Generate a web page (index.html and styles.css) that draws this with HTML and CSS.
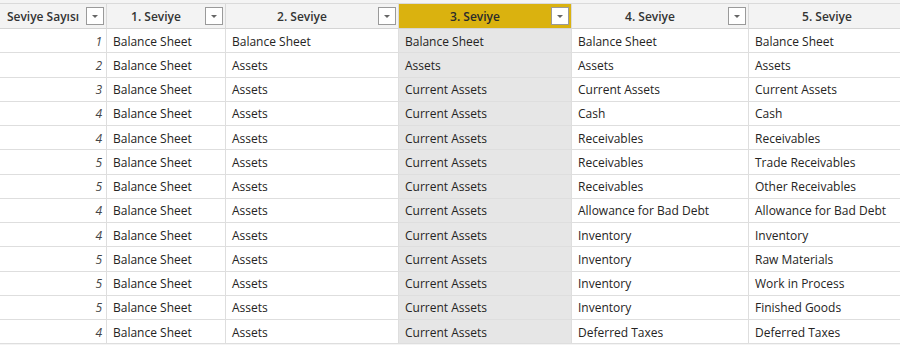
FILE: index.html
```html
<!DOCTYPE html>
<html lang="tr">
<head>
<meta charset="utf-8">
<title>Seviye</title>
<link rel="stylesheet" href="styles.css">
</head>
<body>
<div class="grid">
  <div class="hcell"><span class="htext">Seviye Sayısı</span><span class="filter"><svg viewBox="0 0 18 18" width="18" height="18"><path d="M6 8h6l-3 3z" fill="#666"/></svg></span></div>
  <div class="hcell"><span class="htext">1. Seviye</span><span class="filter"><svg viewBox="0 0 18 18" width="18" height="18"><path d="M6 8h6l-3 3z" fill="#666"/></svg></span></div>
  <div class="hcell"><span class="htext">2. Seviye</span><span class="filter"><svg viewBox="0 0 18 18" width="18" height="18"><path d="M6 8h6l-3 3z" fill="#666"/></svg></span></div>
  <div class="hcell sel"><span class="htext">3. Seviye</span><span class="filter"><svg viewBox="0 0 18 18" width="18" height="18"><path d="M6 8h6l-3 3z" fill="#666"/></svg></span></div>
  <div class="hcell"><span class="htext">4. Seviye</span><span class="filter"><svg viewBox="0 0 18 18" width="18" height="18"><path d="M6 8h6l-3 3z" fill="#666"/></svg></span></div>
  <div class="hcell"><span class="htext">5. Seviye</span><span class="filter"><svg viewBox="0 0 18 18" width="18" height="18"><path d="M6 8h6l-3 3z" fill="#666"/></svg></span></div>

  <div class="cell num">1</div><div class="cell">Balance Sheet</div><div class="cell">Balance Sheet</div><div class="cell sel">Balance Sheet</div><div class="cell">Balance Sheet</div><div class="cell">Balance Sheet</div>
  <div class="cell num">2</div><div class="cell">Balance Sheet</div><div class="cell">Assets</div><div class="cell sel">Assets</div><div class="cell">Assets</div><div class="cell">Assets</div>
  <div class="cell num">3</div><div class="cell">Balance Sheet</div><div class="cell">Assets</div><div class="cell sel">Current Assets</div><div class="cell">Current Assets</div><div class="cell">Current Assets</div>
  <div class="cell num">4</div><div class="cell">Balance Sheet</div><div class="cell">Assets</div><div class="cell sel">Current Assets</div><div class="cell">Cash</div><div class="cell">Cash</div>
  <div class="cell num">4</div><div class="cell">Balance Sheet</div><div class="cell">Assets</div><div class="cell sel">Current Assets</div><div class="cell">Receivables</div><div class="cell">Receivables</div>
  <div class="cell num">5</div><div class="cell">Balance Sheet</div><div class="cell">Assets</div><div class="cell sel">Current Assets</div><div class="cell">Receivables</div><div class="cell">Trade Receivables</div>
  <div class="cell num">5</div><div class="cell">Balance Sheet</div><div class="cell">Assets</div><div class="cell sel">Current Assets</div><div class="cell">Receivables</div><div class="cell">Other Receivables</div>
  <div class="cell num">4</div><div class="cell">Balance Sheet</div><div class="cell">Assets</div><div class="cell sel">Current Assets</div><div class="cell">Allowance for Bad Debt</div><div class="cell">Allowance for Bad Debt</div>
  <div class="cell num">4</div><div class="cell">Balance Sheet</div><div class="cell">Assets</div><div class="cell sel">Current Assets</div><div class="cell">Inventory</div><div class="cell">Inventory</div>
  <div class="cell num">5</div><div class="cell">Balance Sheet</div><div class="cell">Assets</div><div class="cell sel">Current Assets</div><div class="cell">Inventory</div><div class="cell">Raw Materials</div>
  <div class="cell num">5</div><div class="cell">Balance Sheet</div><div class="cell">Assets</div><div class="cell sel">Current Assets</div><div class="cell">Inventory</div><div class="cell">Work in Process</div>
  <div class="cell num">5</div><div class="cell">Balance Sheet</div><div class="cell">Assets</div><div class="cell sel">Current Assets</div><div class="cell">Inventory</div><div class="cell">Finished Goods</div>
  <div class="cell num">4</div><div class="cell">Balance Sheet</div><div class="cell">Assets</div><div class="cell sel">Current Assets</div><div class="cell">Deferred Taxes</div><div class="cell">Deferred Taxes</div>
</div>
</body>
</html>
```

FILE: styles.css
```css
html, body {
  margin: 0;
  padding: 0;
  width: 900px;
  height: 345px;
  overflow: hidden;
  background: #ffffff;
}
body {
  padding-top: 3px;
  background: #f4f4f4;
  box-sizing: border-box;
  font-family: "Open Sans", "Noto Sans", sans-serif;
  font-size: 12px;
  color: #252423;
}
.grid {
  display: grid;
  grid-template-columns: 107px 119px 173px 173px 177px 177px;
  grid-template-rows: 25px;
  grid-auto-rows: 24.25px;
  width: 926px;
  background: #ffffff;
  border-top: 1px solid #dadada;
}
.hcell {
  display: flex;
  align-items: center;
  background: #f3f3f3;
  border-right: 1px solid #dadada;
  border-bottom: 1px solid #d4d4d4;
  box-sizing: border-box;
  padding-right: 2px;
  font-weight: 600;
  color: #333333;
  overflow: hidden;
}
.hcell.sel {
  background: #dab20f;
  color: #2b2b2b;
}
.htext {
  flex: 1;
  text-align: center;
  white-space: nowrap;
}
.filter {
  width: 18px;
  height: 18px;
  box-sizing: border-box;
  border: 1px solid #9a9a9a;
  background: #ffffff;
  display: flex;
}
.filter svg {
  margin: -1px;
}
.cell {
  display: flex;
  align-items: center;
  padding-left: 6px;
  padding-top: 1px;
  border-right: 1px solid #dedede;
  border-bottom: 1px solid #dedede;
  box-sizing: border-box;
  white-space: nowrap;
  overflow: hidden;
}
.cell.sel {
  background: #e6e6e6;
}
.cell.num {
  justify-content: flex-end;
  padding-left: 0;
  padding-right: 4px;
  font-style: italic;
  color: #444444;
}
```
